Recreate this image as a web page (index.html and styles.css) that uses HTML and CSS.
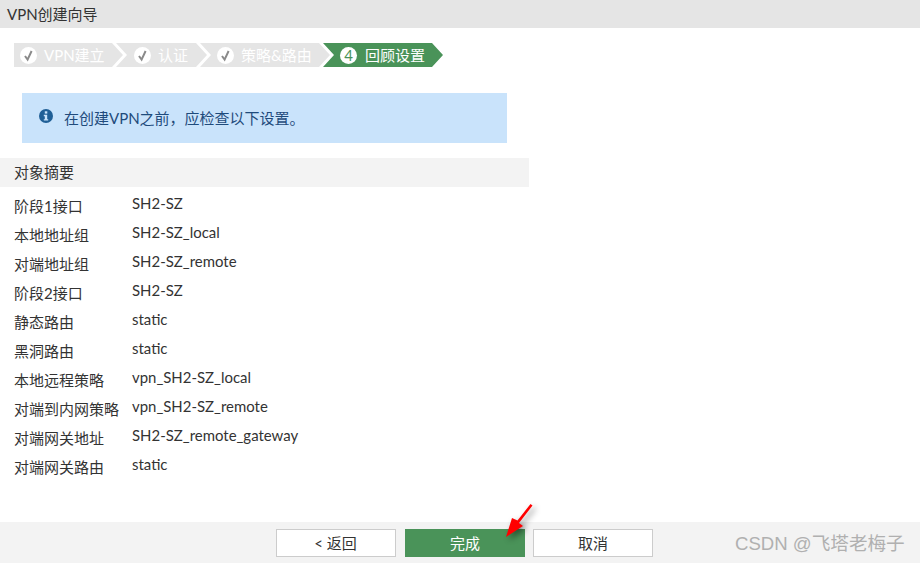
FILE: index.html
```
<!DOCTYPE html>
<html lang="zh-CN">
<head>
<meta charset="utf-8">
<title>VPN创建向导</title>
<link rel="stylesheet" href="styles.css">
</head>
<body>
<div class="page">
  <header class="title">VPN创建向导</header>
  <main class="main">
    <ol class="steps">
      <li class="step step-1"><svg class="badge" viewBox="0 0 17 17"><circle cx="8.5" cy="8.5" r="8.5" fill="#fff"/><path d="M5 9l2.6 3.6L11.6 4" fill="none" stroke="#8a8a8a" stroke-width="2"/></svg><span>VPN建立</span></li>
      <li class="step step-2"><svg class="badge" viewBox="0 0 17 17"><circle cx="8.5" cy="8.5" r="8.5" fill="#fff"/><path d="M5 9l2.6 3.6L11.6 4" fill="none" stroke="#8a8a8a" stroke-width="2"/></svg><span>认证</span></li>
      <li class="step step-3"><svg class="badge" viewBox="0 0 17 17"><circle cx="8.5" cy="8.5" r="8.5" fill="#fff"/><path d="M5 9l2.6 3.6L11.6 4" fill="none" stroke="#8a8a8a" stroke-width="2"/></svg><span>策略&amp;路由</span></li>
      <li class="step step-4 current"><span class="num">4</span><span>回顾设置</span></li>
    </ol>
    <div class="notice">
      <svg class="info" viewBox="0 0 14 14"><circle cx="7" cy="7" r="7" fill="#1f5f96"/><rect x="5.8" y="2.3" width="2.5" height="2.3" fill="#c9e3fb"/><path d="M4.8 5.8h3.4v4.4h1v1.4H4.8v-1.4h1V7.2h-1z" fill="#c9e3fb"/></svg>
      <span class="notice-text">在创建VPN之前，应检查以下设置。</span>
    </div>
    <section class="summary">
      <h2 class="summary-head">对象摘要</h2>
      <dl class="rows">
        <div class="row"><dt>阶段1接口</dt><dd>SH2-SZ</dd></div>
        <div class="row"><dt>本地地址组</dt><dd>SH2-SZ_local</dd></div>
        <div class="row"><dt>对端地址组</dt><dd>SH2-SZ_remote</dd></div>
        <div class="row"><dt>阶段2接口</dt><dd>SH2-SZ</dd></div>
        <div class="row"><dt>静态路由</dt><dd>static</dd></div>
        <div class="row"><dt>黑洞路由</dt><dd>static</dd></div>
        <div class="row"><dt>本地远程策略</dt><dd>vpn_SH2-SZ_local</dd></div>
        <div class="row"><dt>对端到内网策略</dt><dd>vpn_SH2-SZ_remote</dd></div>
        <div class="row"><dt>对端网关地址</dt><dd>SH2-SZ_remote_gateway</dd></div>
        <div class="row"><dt>对端网关路由</dt><dd>static</dd></div>
      </dl>
    </section>
  </main>
  <footer class="footer">
    <button class="btn back">&lt; 返回</button>
    <button class="btn primary">完成</button>
    <button class="btn">取消</button>
  </footer>
  <svg class="arrow" viewBox="0 0 40 44"><path d="M26.5 2 13.5 18.5 8 16 2 35 19 24 15 21 28.5 3.5z" fill="#f00"/></svg>
  <div class="watermark">CSDN @飞塔老梅子</div>
</div>
</body>
</html>
```
FILE: styles.css
```
* { box-sizing: border-box; }
html, body { margin: 0; padding: 0; background: #fff; }
.page {
  position: relative;
  width: 920px;
  height: 563px;
  overflow: hidden;
  display: flex;
  flex-direction: column;
  font-family: Lato, "Noto Sans CJK SC", sans-serif;
  font-size: 15px;
  color: #333;
}
.title {
  height: 28px;
  line-height: 28px;
  padding-left: 7px;
  background: #e5e5e5;
  color: #333;
  flex: none;
}
.main { flex: 1; min-height: 0; }
.steps {
  list-style: none;
  margin: 15px 0 0 14px;
  padding: 0;
  display: flex;
  height: 24px;
}
.step {
  height: 24px;
  display: flex;
  align-items: center;
  color: #fff;
  background: #e5e5e5;
  white-space: nowrap;
  clip-path: polygon(0 0, calc(100% - 11px) 0, 100% 50%, calc(100% - 11px) 100%, 0 100%, 11px 50%);
}
.step span:last-child { margin-top: -2px; }
.step-1 {
  width: 109px;
  padding-left: 6px;
  clip-path: polygon(0 0, calc(100% - 11px) 0, 100% 50%, calc(100% - 11px) 100%, 0 100%);
}
.step-2 { width: 91px; margin-left: -7px; padding-left: 18px; }
.step-3 { width: 130px; margin-left: -7px; padding-left: 17px; }
.step-4 { width: 120px; margin-left: -7px; padding-left: 17px; background: #4a9359; }
.badge { width: 17px; height: 17px; flex: none; margin-right: 7px; }
.num {
  width: 17px;
  height: 17px;
  flex: none;
  margin-right: 8px;
  border-radius: 50%;
  background: #fff;
  color: #4a9359;
  text-align: center;
  line-height: 17px;
  font-size: 15px;
}
.notice {
  margin: 26px 0 0 22px;
  width: 485px;
  height: 50px;
  padding: 0 0 0 17px;
  display: flex;
  align-items: center;
  background: #c9e3fb;
  color: #1f4b7c;
}
.notice-text { margin-top: -2px; }
.info { width: 14px; height: 14px; flex: none; margin: -4px 11px 0 0; }
.summary { margin-top: 15px; }
.summary-head {
  margin: 0;
  width: 529px;
  height: 29px;
  line-height: 29px;
  padding-left: 14px;
  background: #f3f3f3;
  font-size: 15px;
  font-weight: 400;
  color: #333;
}
.rows { margin: 5px 0 0; }
.row {
  display: grid;
  grid-template-columns: 118px 1fr;
  height: 29px;
  line-height: 29px;
  padding-left: 14px;
}
.row dt { margin: 0; }
.row dd { margin: 0; padding-bottom: 6px; line-height: 23px; font-size: 14.95px; }
.footer {
  flex: none;
  height: 41px;
  background: #f3f3f3;
  display: flex;
  gap: 8px;
  padding: 7px 0 0 276px;
}
.btn {
  width: 120px;
  height: 28px;
  padding: 0;
  border: 1px solid #ccc;
  background: #fff;
  color: #333;
  font: inherit;
  font-size: 15px;
  line-height: 26px;
}
.btn.back { padding-right: 1px; }
.btn.primary {
  margin-left: 1px;
  background: #4a9359;
  border-color: #4a9359;
  color: #fff;
}
.arrow {
  position: absolute;
  left: 504px;
  top: 502px;
  width: 40px;
  height: 44px;
  filter: drop-shadow(3px 3px 3px rgba(0, 0, 0, 0.45));
}
.watermark {
  position: absolute;
  left: 735px;
  top: 530px;
  font-family: "Liberation Sans", "Noto Sans CJK SC", sans-serif;
  font-size: 18.6px;
  line-height: 28px;
  color: #b0b0b0;
  white-space: nowrap;
}
```
